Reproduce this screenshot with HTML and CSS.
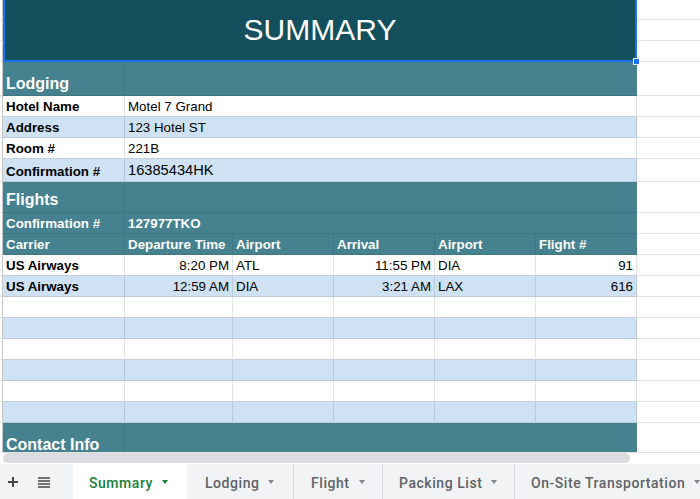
FILE: index.html
```html
<!DOCTYPE html>
<html>
<head>
<meta charset="utf-8">
<link rel="stylesheet" href="styles.css">
</head>
<body>
<div class="viewport">
  <div class="row h62 top">
    <div class="c c0 split"><i class="k20"></i><i></i><i></i></div>
    <div class="c title s6">SUMMARY<span class="sel"></span><span class="handle"></span></div>
    <div class="c cg split"><i class="k20"></i><i></i><i></i></div>
  </div>
  <div class="row h34">
    <div class="c c0"></div>
    <div class="c t a sec">Lodging</div>
    <div class="c t s5 edge"></div>
    <div class="c cg"></div>
  </div>
  <div class="row">
    <div class="c c0"></div>
    <div class="c w a lbl">Hotel Name</div>
    <div class="c w s5">Motel 7 Grand</div>
    <div class="c cg"></div>
  </div>
  <div class="row">
    <div class="c c0"></div>
    <div class="c bl a lbl">Address</div>
    <div class="c bl s5">123 Hotel ST</div>
    <div class="c cg"></div>
  </div>
  <div class="row">
    <div class="c c0"></div>
    <div class="c w a lbl">Room #</div>
    <div class="c w s5">221B</div>
    <div class="c cg"></div>
  </div>
  <div class="row h23">
    <div class="c c0"></div>
    <div class="c bl a lbl">Confirmation #</div>
    <div class="c bl s5 big">16385434HK</div>
    <div class="c cg"></div>
  </div>
  <div class="row h31">
    <div class="c c0"></div>
    <div class="c t a sec pb3">Flights</div>
    <div class="c t s5 edge"></div>
    <div class="c cg"></div>
  </div>
  <div class="row">
    <div class="c c0"></div>
    <div class="c t a">Confirmation #</div>
    <div class="c t s5 edge">127977TKO</div>
    <div class="c cg"></div>
  </div>
  <div class="row">
    <div class="c c0"></div>
    <div class="c t a">Carrier</div>
    <div class="c t">Departure Time</div>
    <div class="c t">Airport</div>
    <div class="c t">Arrival</div>
    <div class="c t">Airport</div>
    <div class="c t edge">Flight #</div>
    <div class="c cg"></div>
  </div>
  <div class="row">
    <div class="c c0"></div>
    <div class="c w a lbl">US Airways</div>
    <div class="c w r">8:20 PM</div>
    <div class="c w">ATL</div>
    <div class="c w r">11:55 PM</div>
    <div class="c w">DIA</div>
    <div class="c w r">91</div>
    <div class="c cg"></div>
  </div>
  <div class="row">
    <div class="c c0"></div>
    <div class="c bl a lbl">US Airways</div>
    <div class="c bl r">12:59 AM</div>
    <div class="c bl">DIA</div>
    <div class="c bl r">3:21 AM</div>
    <div class="c bl">LAX</div>
    <div class="c bl r">616</div>
    <div class="c cg"></div>
  </div>
  <div class="row">
    <div class="c c0"></div><div class="c w"></div><div class="c w"></div><div class="c w"></div><div class="c w"></div><div class="c w"></div><div class="c w"></div><div class="c cg"></div>
  </div>
  <div class="row">
    <div class="c c0"></div><div class="c bl"></div><div class="c bl"></div><div class="c bl"></div><div class="c bl"></div><div class="c bl"></div><div class="c bl"></div><div class="c cg"></div>
  </div>
  <div class="row">
    <div class="c c0"></div><div class="c w"></div><div class="c w"></div><div class="c w"></div><div class="c w"></div><div class="c w"></div><div class="c w"></div><div class="c cg"></div>
  </div>
  <div class="row">
    <div class="c c0"></div><div class="c bl"></div><div class="c bl"></div><div class="c bl"></div><div class="c bl"></div><div class="c bl"></div><div class="c bl"></div><div class="c cg"></div>
  </div>
  <div class="row">
    <div class="c c0"></div><div class="c w"></div><div class="c w"></div><div class="c w"></div><div class="c w"></div><div class="c w"></div><div class="c w"></div><div class="c cg"></div>
  </div>
  <div class="row">
    <div class="c c0"></div><div class="c bl"></div><div class="c bl"></div><div class="c bl"></div><div class="c bl"></div><div class="c bl"></div><div class="c bl"></div><div class="c cg"></div>
  </div>
  <div class="row h34">
    <div class="c c0"></div>
    <div class="c t a sec">Contact Info</div>
    <div class="c t s5 edge"></div>
    <div class="c cg"></div>
  </div>
</div>
<div class="scroll"><div class="thumb"></div></div>
<div class="tabs">
  <div class="tools">
    <svg class="plus" width="12" height="12" viewBox="0 0 12 12"><path d="M6 1v10M1 6h10" stroke="#444746" stroke-width="2" fill="none"/></svg>
    <svg class="list" width="14" height="11" viewBox="0 0 14 11"><path d="M1 1h12M1 4h12M1 7h12M1 10h12" stroke="#444746" stroke-width="1.6" fill="none"/></svg>
  </div>
  <div class="tab active w114">Summary<span class="arrow"></span></div>
  <div class="tab w107 pl18">Lodging<span class="arrow"></span></div>
  <div class="tab w89 pl17">Flight<span class="arrow"></span></div>
  <div class="tab w132">Packing List<span class="arrow"></span></div>
  <div class="tab last">On-Site Transportation<span class="arrow"></span></div>
</div>
</body>
</html>
```

FILE: styles.css
```css
* { box-sizing: border-box; margin: 0; padding: 0; }
html, body { width: 700px; height: 499px; overflow: hidden; background: #fff; }
body { font-family: "Liberation Sans", Arial, sans-serif; font-size: 13.33px; color: #000; }

.viewport { height: 453px; overflow: hidden; border-bottom: 1px solid #e1e3e1; }

.row {
  display: grid;
  grid-template-columns: 3px 122px 108px 101px 101px 101px 101px 1fr;
  height: 21px;
}
.h62 { height: 62px; }
.h34 { height: 34px; }
.h23 { height: 23px; }
.h31 { height: 31px; }
.top { position: relative; z-index: 2; }

.c {
  display: flex;
  align-items: flex-end;
  padding: 0 3px 2px 3px;
  border-right: 1px solid #e2e3e3;
  border-bottom: 1px solid #e2e3e3;
  white-space: nowrap;
  overflow: hidden;
  line-height: 15px;
}
.c0 { padding: 0; border-right-color: #c4c7c5; }
.cg { padding: 0; border-right: none; }
.split { flex-direction: column; align-items: stretch; border-bottom: none; }
.split i { display: block; height: 21px; border-bottom: 1px solid #e2e3e3; }
.split i.k20 { height: 20px; }
.s5 { grid-column: span 5; }
.s6 { grid-column: span 6; }
.a { padding-left: 3px; }
.r { justify-content: flex-end; }

.w { background: #fff; border-bottom-color: #c3d0dc; }
.bl { background: #cfe2f3; border-color: #b9c9d8; }
.lbl { font-weight: bold; }
.big { font-size: 14.67px; line-height: 17px; }

.t { background: #45818e; color: #fff; font-weight: bold; border-color: #3e7682; }
.t.edge { border-right-color: #45818e; }
.sec { font-size: 16px; line-height: 18px; }
.pb3 { padding-bottom: 3px; }

.title {
  position: relative;
  overflow: visible;
  background: #134f5c;
  border: none;
  padding: 0;
  justify-content: center;
  align-items: center;
  color: #fff;
  font-size: 30px;
  line-height: 34px;
  padding-bottom: 2px;
}
.sel {
  position: absolute;
  left: 0; right: 0; bottom: 0; top: -2px;
  border: 2px solid #1a73e8;
}
.handle {
  position: absolute;
  right: -3px; bottom: -3px;
  width: 7px; height: 7px;
  background: #1a73e8;
  border: 1px solid #fff;
}

.scroll { height: 11px; background: #fff; padding-left: 3px; }
.thumb { width: 627px; height: 10px; background: #dadce0; border-radius: 5px; }

.tabs {
  height: 35px;
  background: #f1f3f4;
  display: flex;
  overflow: hidden;
  font-family: Roboto, "Noto Sans", sans-serif;
  font-size: 14px;
  font-weight: 500;
  letter-spacing: 0.55px;
  color: #5f6368;
}
.tools { width: 73px; flex: none; display: flex; align-items: center; padding-top: 1px; }
.plus { margin-left: 7px; }
.list { margin-left: 18px; }
.tab {
  flex: none;
  display: flex;
  align-items: center;
  padding: 2px 0 0 16px;
  border-right: 1px solid #dadce0;
}
.tab.active { background: #fff; color: #188038; border-right: none; }
.w114 { width: 114px; }
.w107 { width: 107px; }
.w89 { width: 89px; }
.w132 { width: 132px; }
.pl18 { padding-left: 18px; }
.pl17 { padding-left: 17px; }
.last { border-right: none; }
.arrow {
  margin-left: 9px;
  width: 0; height: 0;
  border-left: 3.5px solid transparent;
  border-right: 3.5px solid transparent;
  border-top: 4px solid #80868b;
  margin-top: -1px;
}
.active .arrow { border-top-color: #188038; }
```
